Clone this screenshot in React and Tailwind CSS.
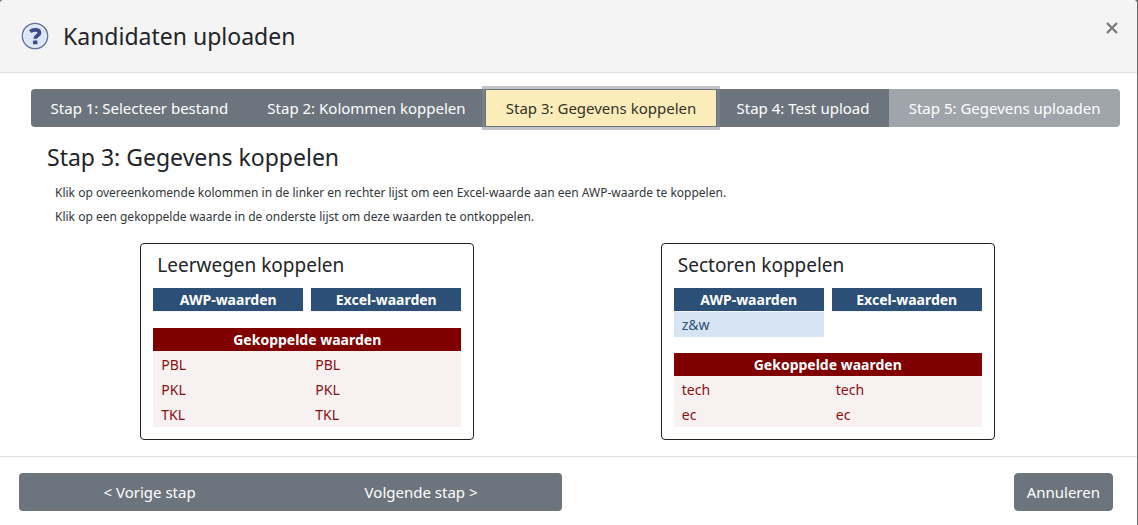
import React from "react";

const steps = [
  { label: "Stap 1: Selecteer bestand", state: "idle" },
  { label: "Stap 2: Kolommen koppelen", state: "idle" },
  { label: "Stap 3: Gegevens koppelen", state: "current" },
  { label: "Stap 4: Test upload", state: "idle" },
  { label: "Stap 5: Gegevens uploaden", state: "disabled" },
];

const panels = [
  {
    title: "Leerwegen koppelen",
    awp: [],
    excel: [],
    linked: [["PBL", "PBL"], ["PKL", "PKL"], ["TKL", "TKL"]],
  },
  {
    title: "Sectoren koppelen",
    awp: ["z&w"],
    excel: [],
    linked: [["tech", "tech"], ["ec", "ec"]],
  },
];

const stepStyles = {
  idle: "bg-[#6c757d] text-white",
  current:
    "relative z-10 border border-[#6c757d] bg-[#fbecb9] text-[#33332a] ring-3 ring-[#828a91]/50",
  disabled: "bg-[#a0a5ab] text-white",
};

function HelpIcon() {
  return (
    <svg viewBox="0 0 28 28" className="size-7 shrink-0" aria-hidden="true">
      <circle cx="14" cy="14" r="12.6" fill="#dce5f4" stroke="#6471ab" strokeWidth="1.5" />
      <circle cx="14" cy="14" r="11.3" fill="none" stroke="#f0f4fb" strokeWidth="0.9" />
      <path
        d="M9.2 9.7C10.5 8.6 12.2 7.9 14.2 7.9C16.9 7.9 18.5 9 18.5 11C18.5 13.6 14.3 13.2 14.2 16.8"
        fill="none"
        stroke="#3d4a8c"
        strokeWidth="3.7"
      />
      <rect x="12" y="18.6" width="4.4" height="3.7" rx="0.6" fill="#3d4a8c" />
    </svg>
  );
}

function ValueList({ title, values }) {
  return (
    <table className="w-full table-fixed border-separate border-spacing-0 self-start">
      <thead>
        <tr>
          <th className="h-6 border-b border-[#f4f4f8] bg-[#2c4f78] bg-clip-padding p-0 text-center text-sm/5 font-bold text-white">
            {title}
          </th>
        </tr>
      </thead>
      <tbody>
        {values.map((value) => (
          <tr key={value}>
            <td className="bg-[#d6e4f4] p-0">
              <button type="button" className="block h-[25px] w-full px-2 text-left text-sm/6 text-[#2c4f78]">
                {value}
              </button>
            </td>
          </tr>
        ))}
      </tbody>
    </table>
  );
}

function LinkPanel({ panel }) {
  return (
    <section className="w-[334px] rounded border border-[#23231a] px-3 pb-3">
      <h3 className="px-1 pt-1.5 pb-2 text-[19px]/[30px] text-[#212529]">{panel.title}</h3>
      <div className="grid grid-cols-2 gap-2">
        <ValueList title="AWP-waarden" values={panel.awp} />
        <ValueList title="Excel-waarden" values={panel.excel} />
      </div>
      <table className="mt-4 w-full table-fixed border-separate border-spacing-0">
        <thead>
          <tr>
            <th
              colSpan={2}
              className="h-6 border-b border-[#f7f1f2] bg-[#800000] bg-clip-padding p-0 text-center text-sm/5 font-bold text-white"
            >
              Gekoppelde waarden
            </th>
          </tr>
        </thead>
        <tbody>
          {panel.linked.map((pair) => (
            <tr key={pair[0]} className="bg-[#f7f1f2]">
              {pair.map((value, i) => (
                <td key={i} className="p-0">
                  <button type="button" className="block h-[25px] w-full px-2 text-left text-sm/6 text-[#8a1010]">
                    {value}
                  </button>
                </td>
              ))}
            </tr>
          ))}
        </tbody>
      </table>
    </section>
  );
}

export default function App() {
  return (
    <div className="bg-[#6b6b6b] pr-px font-['Noto_Sans','Open_Sans',sans-serif] text-[#212529]">
      <div role="dialog" aria-labelledby="dialog-title" className="flex min-h-screen flex-col rounded-t bg-white">
        <header className="flex items-start justify-between rounded-t border-b border-[#dee2e6] bg-[#f4f4f4] pt-4 pr-3.5 pb-4 pl-5">
          <div className="flex items-center gap-3.5 py-0.5 pl-px">
            <HelpIcon />
            <h1 id="dialog-title" className="text-[23px]/9">Kandidaten uploaden</h1>
          </div>
          <button type="button" aria-label="Sluiten" className="p-1 text-[#797979]">
            <svg viewBox="0 0 12 12" className="my-0.5 mr-px size-3" aria-hidden="true">
              <path d="M1 1L11 11M11 1L1 11" fill="none" stroke="currentColor" strokeWidth="2.3" />
            </svg>
          </button>
        </header>

        <main className="flex-1 pt-4 pr-[17px] pb-4 pl-[31px]">
          <nav aria-label="Stappen" className="flex overflow-visible">
            {steps.map((step) => (
              <button
                key={step.label}
                type="button"
                disabled={step.state === "disabled"}
                aria-current={step.state === "current" ? "step" : undefined}
                className={`h-[38px] flex-auto text-center text-[15px]/6 whitespace-nowrap first:rounded-l last:rounded-r ${stepStyles[step.state]}`}
              >
                {step.label}
              </button>
            ))}
          </nav>

          <h2 className="mt-3 pl-4 text-[23px]/9">Stap 3: Gegevens koppelen</h2>
          <div className="mt-1.5 pl-6 text-xs/6 text-[#33373b]">
            <p>Klik op overeenkomende kolommen in de linker en rechter lijst om een Excel-waarde aan een AWP-waarde te koppelen.</p>
            <p>Klik op een gekoppelde waarde in de onderste lijst om deze waarden te ontkoppelen.</p>
          </div>

          <div className="mt-3.5 mr-8 ml-4 grid grid-cols-2 justify-items-center">
            {panels.map((panel) => (
              <LinkPanel key={panel.title} panel={panel} />
            ))}
          </div>
        </main>

        <footer className="flex items-center justify-between border-t border-[#dee2e6] pt-4 pr-6 pb-3.5 pl-[19px]">
          <div className="flex w-[543px] overflow-hidden rounded bg-[#6c757d] text-[15px]/6 text-white">
            <button type="button" className="h-[38px] flex-auto">&lt; Vorige stap</button>
            <button type="button" className="h-[38px] flex-auto">Volgende stap &gt;</button>
          </div>
          <button type="button" className="h-[38px] rounded border border-[#6c757d] bg-[#6c757d] px-3 text-[15px]/6 text-white">
            Annuleren
          </button>
        </footer>
      </div>
    </div>
  );
}
